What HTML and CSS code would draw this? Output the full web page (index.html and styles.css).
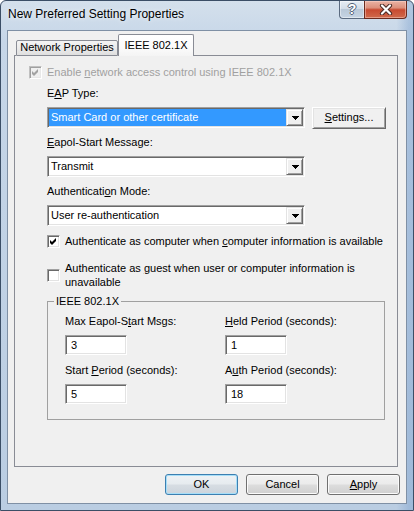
FILE: index.html
```html
<!DOCTYPE html>
<html>
<head>
<meta charset="utf-8">
<link rel="stylesheet" href="styles.css">
</head>
<body>
<div class="window">
  <div class="titlebar">
    <span class="title">New Preferred Setting Properties</span>
    <div class="caption-buttons">
      <div class="cap-btn help"><span class="help-glyph">?</span></div>
      <div class="cap-btn close">
        <svg class="close-glyph" width="14" height="11" viewBox="0 0 14 11">
          <path d="M3 1.5 L11 9.5 M11 1.5 L3 9.5" stroke="#4b2a24" stroke-width="4.2" stroke-linecap="round"/>
          <path d="M3 1.5 L11 9.5 M11 1.5 L3 9.5" stroke="#ffffff" stroke-width="2.2" stroke-linecap="round"/>
        </svg>
      </div>
    </div>
  </div>

  <div class="client">
    <div class="tabstrip">
      <div class="tab-lead"></div>
      <div class="tab">Network Properties</div>
      <div class="tab active">IEEE 802.1X</div>
      <div class="tab-fill"></div>
    </div>

    <div class="panel">
      <div class="check-row first disabled">
        <span class="checkbox disabled">
          <svg width="11" height="11" viewBox="0 0 11 11"><polygon points="2,4 4,6 8,2 8,5 4,9 2,7" fill="#a3a3a3"/></svg>
        </span>
        <span class="check-text">Enable <u>n</u>etwork access control using IEEE 802.1X</span>
      </div>

      <div class="section">
        <div class="field-label first-label">E<u>A</u>P Type:</div>
        <div class="combo-row">
          <div class="combo">
            <span class="combo-text selected">Smart Card or other certificate</span>
            <span class="drop"><svg width="7" height="4" viewBox="0 0 7 4" shape-rendering="crispEdges"><rect x="0" y="0" width="7" height="1"/><rect x="1" y="1" width="5" height="1"/><rect x="2" y="2" width="3" height="1"/><rect x="3" y="3" width="1" height="1"/></svg></span>
          </div>
          <div class="btn-classic"><u>S</u>ettings...</div>
        </div>

        <div class="field-label"><u>E</u>apol-Start Message:</div>
        <div class="combo-row">
          <div class="combo">
            <span class="combo-text">Transmit</span>
            <span class="drop"><svg width="7" height="4" viewBox="0 0 7 4" shape-rendering="crispEdges"><rect x="0" y="0" width="7" height="1"/><rect x="1" y="1" width="5" height="1"/><rect x="2" y="2" width="3" height="1"/><rect x="3" y="3" width="1" height="1"/></svg></span>
          </div>
        </div>

        <div class="field-label label-auth">Authenticati<u>o</u>n Mode:</div>
        <div class="combo-row">
          <div class="combo">
            <span class="combo-text">User re-authentication</span>
            <span class="drop"><svg width="7" height="4" viewBox="0 0 7 4" shape-rendering="crispEdges"><rect x="0" y="0" width="7" height="1"/><rect x="1" y="1" width="5" height="1"/><rect x="2" y="2" width="3" height="1"/><rect x="3" y="3" width="1" height="1"/></svg></span>
          </div>
        </div>

        <div class="check-row computer">
          <span class="checkbox">
            <svg width="11" height="11" viewBox="0 0 11 11"><polygon points="2,4 4,6 8,2 8,5 4,9 2,7" fill="#000"/></svg>
          </span>
          <span class="check-text">Authenticate as computer when <u>c</u>omputer information is available</span>
        </div>

        <div class="check-row guest">
          <span class="checkbox"></span>
          <span class="check-text"><span class="line">Authenticate as <u>g</u>uest when user or computer information is</span><span class="line">unavailable</span></span>
        </div>

        <fieldset class="group">
          <legend>IEEE 802.1X</legend>
          <div class="group-grid">
            <div class="cell">
              <div class="field-label small">Max Eapol-S<u>t</u>art Msgs:</div>
              <div class="textbox">3</div>
            </div>
            <div class="cell">
              <div class="field-label small"><u>H</u>eld Period (seconds):</div>
              <div class="textbox">1</div>
            </div>
            <div class="cell">
              <div class="field-label small">Start <u>P</u>eriod (seconds):</div>
              <div class="textbox">5</div>
            </div>
            <div class="cell">
              <div class="field-label small">A<u>u</u>th Period (seconds):</div>
              <div class="textbox">18</div>
            </div>
          </div>
        </fieldset>
      </div>
    </div>

    <div class="button-row">
      <div class="vbtn default">OK</div>
      <div class="vbtn">Cancel</div>
      <div class="vbtn"><u>A</u>pply</div>
    </div>
  </div>
</div>
</body>
</html>
```

FILE: styles.css
```css
html, body {
  margin: 0;
  padding: 0;
  background: #ffffff;
}

body {
  font-family: "Liberation Sans", Arial, sans-serif;
  font-size: 11px;
  color: #000;
}

u {
  text-decoration-thickness: 1px;
  text-underline-offset: 1px;
}

.window {
  width: 414px;
  height: 511px;
  box-sizing: border-box;
  border: 1px solid #3b4e66;
  border-radius: 6px 6px 0 0;
  background:
    linear-gradient(90deg, rgba(255,255,255,0) 0, rgba(255,255,255,0) 96%, rgba(110,150,200,0.35) 99%),
    linear-gradient(180deg, #d4e0ec 0, #c6d6e8 40px, #bacde2 100%);
  display: flex;
  flex-direction: column;
  overflow: hidden;
}

/* Title bar */
.titlebar {
  height: 29px;
  display: flex;
  align-items: flex-start;
  padding: 0 6px 0 7px;
  flex: none;
}

.title {
  flex: 1;
  margin-top: 6px;
  font-size: 12px;
  line-height: 14px;
  color: #000;
  text-shadow: 0 0 5px rgba(255,255,255,0.95);
  white-space: nowrap;
}

.caption-buttons {
  display: flex;
  height: 18px;
}

.cap-btn {
  height: 18px;
  box-sizing: border-box;
  border: 1px solid #5b6b80;
  border-top: none;
  display: flex;
  align-items: center;
  justify-content: center;
}

.help {
  width: 25px;
  border-right: none;
  border-radius: 0 0 0 4px;
  background: linear-gradient(180deg, #e6edf4 0%, #d3dde8 45%, #b9c8d8 50%, #c6d4e3 100%);
  box-shadow: inset 0 0 0 1px rgba(255,255,255,0.45);
}

.help-glyph {
  font-family: "Liberation Sans", Arial, sans-serif;
  font-weight: bold;
  font-size: 14px;
  line-height: 14px;
  color: #ffffff;
  margin-top: -1px;
  text-shadow: 1px 0 0 #55657a, -1px 0 0 #55657a, 0 1px 0 #55657a, 0 -1px 0 #55657a;
}

.close {
  width: 43px;
  border-color: #6a2a1e;
  border-radius: 0 0 4px 0;
  background: linear-gradient(180deg, #eab3a4 0%, #dc907c 40%, #c84a30 52%, #d06a4c 100%);
  box-shadow: inset 0 0 0 1px rgba(255,220,210,0.45);
}

.close-glyph {
  display: block;
}

/* Client area */
.client {
  margin: 0 6px 6px 6px;
  height: 474px;
  box-sizing: border-box;
  border: 1px solid #7f90a5;
  background: #f0f0f0;
  display: flex;
  flex-direction: column;
  flex: none;
}

/* Tabs */
.tabstrip {
  margin: 3px 8px 0 6px;
  height: 22px;
  display: flex;
  align-items: flex-end;
  flex: none;
}

.tab-lead {
  width: 2px;
  height: 0;
  border-bottom: 1px solid #898c95;
}

.tab {
  width: 102px;
  height: 16px;
  box-sizing: border-box;
  border: 1px solid #898c95;
  border-radius: 2px 2px 0 0;
  background: linear-gradient(180deg, #f4f4f4 0%, #ebebeb 50%, #dfdfdf 100%);
  text-align: center;
  line-height: 13px;
  white-space: nowrap;
}

.tab.active {
  width: 76px;
  height: 22px;
  border-bottom: none;
  background: linear-gradient(180deg, #ffffff 0%, #fbfbfb 60%, #f4f4f4 100%);
  padding-top: 4px;
}

.tab-fill {
  flex: 1;
  height: 0;
  border-bottom: 1px solid #898c95;
}

.panel {
  margin: 0 8px 0 6px;
  height: 411px;
  box-sizing: border-box;
  border: 1px solid #898c95;
  border-top: none;
  flex: none;
}

/* Checkboxes */
.check-row {
  display: flex;
  align-items: center;
  gap: 5px;
  line-height: 13px;
}

.check-row.first {
  margin: 10px 0 0 14px;
  height: 13px;
}

.check-row.disabled .check-text {
  color: #a0a0a0;
}

.check-row.computer {
  margin-top: 9px;
  height: 13px;
}

.check-row.guest {
  margin-top: 13px;
  height: 28px;
  line-height: 14px;
}

.check-row.guest .check-text {
  display: flex;
  flex-direction: column;
}

.check-row.guest .line {
  display: block;
  white-space: nowrap;
}

.checkbox {
  width: 13px;
  height: 13px;
  box-sizing: border-box;
  flex: none;
  border: 1px solid;
  border-color: #a0a0a0 #ffffff #ffffff #a0a0a0;
  box-shadow: inset 1px 1px 0 #696969, inset -1px -1px 0 #e3e3e3;
  background: #ffffff;
}

.checkbox.disabled {
  background: #f0f0f0;
  border-color: #c0c0c0 #ffffff #ffffff #c0c0c0;
  box-shadow: inset 1px 1px 0 #a0a0a0, inset -1px -1px 0 #e8e8e8;
}

.checkbox svg {
  display: block;
}

/* Fields */
.section {
  padding-left: 32px;
}

.field-label {
  line-height: 13px;
  margin-top: 7px;
  margin-bottom: 7px;
  white-space: nowrap;
}

.field-label.first-label {
  margin-top: 8px;
}

.field-label.label-auth {
  margin-top: 8px;
}

.combo-row {
  display: flex;
  align-items: flex-start;
  gap: 7px;
}

.combo {
  width: 258px;
  height: 21px;
  box-sizing: border-box;
  border: 1px solid;
  border-color: #a0a0a0 #ffffff #ffffff #a0a0a0;
  box-shadow: inset 1px 1px 0 #696969, inset -1px -1px 0 #e3e3e3;
  padding: 1px;
  background: #ffffff;
  display: flex;
}

.combo-text {
  flex: 1;
  line-height: 17px;
  padding-left: 2px;
  white-space: nowrap;
}

.combo-text.selected {
  background: #3399ff;
  color: #ffffff;
}

.drop {
  width: 17px;
  height: 17px;
  box-sizing: border-box;
  border: 1px solid;
  border-color: #e3e3e3 #696969 #696969 #e3e3e3;
  box-shadow: inset 1px 1px 0 #ffffff, inset -1px -1px 0 #a0a0a0;
  background: #f0f0f0;
  display: flex;
  align-items: center;
  justify-content: center;
  flex: none;
}

.drop svg {
  display: block;
  margin-left: 1px;
}

.btn-classic {
  width: 74px;
  height: 22px;
  box-sizing: border-box;
  border: 1px solid;
  border-color: #ffffff #696969 #696969 #ffffff;
  box-shadow: inset 1px 1px 0 #e3e3e3, inset -1px -1px 0 #a0a0a0;
  background: #f0f0f0;
  text-align: center;
  line-height: 19px;
  white-space: nowrap;
}

/* Group box */
.group {
  margin: 6px 0 0 0;
  width: 338px;
  box-sizing: border-box;
  border: 1px solid #a0a0a0;
  padding: 0 0 15px 17px;
  min-width: 0;
}

.group legend {
  margin-left: -11px;
  padding: 0 2px;
  line-height: 13px;
}

.group-grid {
  display: grid;
  grid-template-columns: 160px 150px;
  row-gap: 9px;
}

.field-label.small {
  margin-top: 0;
}

.group-grid .cell:nth-child(1),
.group-grid .cell:nth-child(2) {
  margin-top: 7px;
}

.textbox {
  width: 62px;
  height: 20px;
  box-sizing: border-box;
  border: 1px solid;
  border-color: #a0a0a0 #ffffff #ffffff #a0a0a0;
  box-shadow: inset 1px 1px 0 #696969, inset -1px -1px 0 #e3e3e3;
  background: #ffffff;
  padding-left: 5px;
  line-height: 18px;
}

/* Bottom buttons */
.button-row {
  display: flex;
  justify-content: flex-end;
  gap: 8px;
  padding: 7px 6px 0 0;
}

.vbtn {
  width: 73px;
  height: 21px;
  box-sizing: border-box;
  border: 1px solid #707070;
  border-radius: 3px;
  background: linear-gradient(180deg, #f2f2f2 0%, #ebebeb 48%, #dddddd 52%, #cfcfcf 100%);
  box-shadow: inset 0 0 0 1px #fbfbfb;
  text-align: center;
  line-height: 19px;
}

.vbtn.default {
  border-color: #3c7fb1;
  background: linear-gradient(180deg, #eef2f5 0%, #e6ebef 48%, #d7dde3 52%, #ccd4dc 100%);
  box-shadow: inset 0 0 0 1px #a6def8;
}
```
